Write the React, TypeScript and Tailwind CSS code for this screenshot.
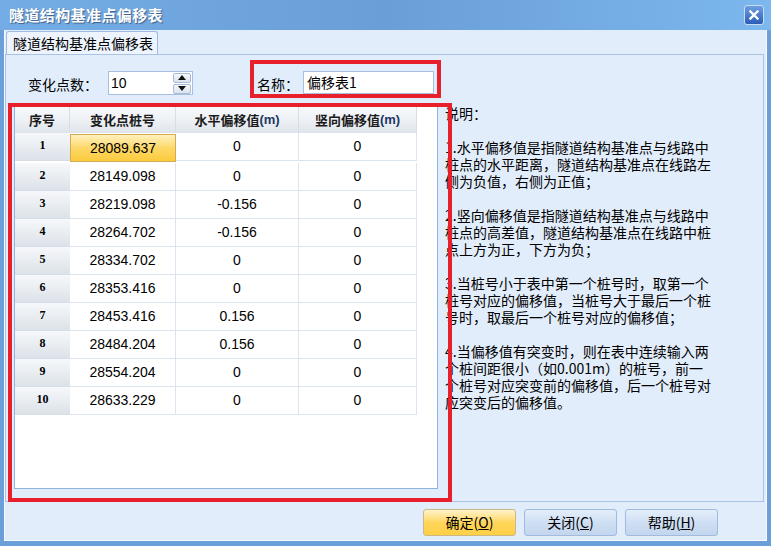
import React from "react";

const rows: [string, string, string, string][] = [
  ["1", "28089.637", "0", "0"],
  ["2", "28149.098", "0", "0"],
  ["3", "28219.098", "-0.156", "0"],
  ["4", "28264.702", "-0.156", "0"],
  ["5", "28334.702", "0", "0"],
  ["6", "28353.416", "0", "0"],
  ["7", "28453.416", "0.156", "0"],
  ["8", "28484.204", "0.156", "0"],
  ["9", "28554.204", "0", "0"],
  ["10", "28633.229", "0", "0"],
];

const notes = [
  "说明：",
  "",
  "1.水平偏移值是指隧道结构基准点与线路中",
  "桩点的水平距离，隧道结构基准点在线路左",
  "侧为负值，右侧为正值；",
  "",
  "2.竖向偏移值是指隧道结构基准点与线路中",
  "桩点的高差值，隧道结构基准点在线路中桩",
  "点上方为正，下方为负；",
  "",
  "3.当桩号小于表中第一个桩号时，取第一个",
  "桩号对应的偏移值，当桩号大于最后一个桩",
  "号时，取最后一个桩号对应的偏移值；",
  "",
  "4.当偏移值有突变时，则在表中连续输入两",
  "个桩间距很小（如0.001m）的桩号，前一",
  "个桩号对应突变前的偏移值，后一个桩号对",
  "应突变后的偏移值。",
];

const cjk = { fontFamily: '"Noto Sans CJK SC", "Liberation Sans", sans-serif' };
const num = { fontFamily: '"Liberation Sans", "Noto Sans CJK SC", sans-serif' };

function Button({ label, hot, primary }: { label: string; hot: string; primary?: boolean }) {
  return (
    <div
      className={`w-[93px] h-[27px] rounded-[3px] border flex items-center justify-center text-[14px] text-black ${
        primary
          ? "border-[#c9b98a] bg-gradient-to-b from-[#fff3c8] via-[#ffd65a] to-[#ffcf45]"
          : "border-[#9fbbe0] bg-gradient-to-b from-[#e4eefa] via-[#cfdff3] to-[#c3d6ee]"
      }`}
      style={cjk}
    >
      {label}(<span className="underline">{hot}</span>)
    </div>
  );
}

export default function App() {
  return (
    <div className="relative w-[771px] h-[546px] bg-[#6a9fd9] flex flex-col overflow-hidden" style={cjk}>
      {/* title bar */}
      <div className="h-[30px] shrink-0 flex items-center justify-between pl-[9px] pr-[7px] bg-gradient-to-r from-[#74ade5] via-[#6a9ed7] to-[#7cb7ee]">
        <span
          className="text-white font-bold text-[15px] tracking-[0.4px]"
          style={{ textShadow: "1px 1px 1px #3b5f8c" }}
        >
          隧道结构基准点偏移表
        </span>
        <div className="w-[20px] h-[20px] rounded-[3px] border border-[#c8dbf3] bg-gradient-to-b from-[#6c9fe0] to-[#2b5db6] flex items-center justify-center">
          <svg width="10" height="10" viewBox="0 0 10 10">
            <path d="M1.5 1.5 L8.5 8.5 M8.5 1.5 L1.5 8.5" stroke="white" strokeWidth="2.4" strokeLinecap="square" />
          </svg>
        </div>
      </div>

      {/* body */}
      <div className="flex-1 ml-[4px] mr-[4px] mb-[5px] bg-[#e2edfb] flex flex-col border-l border-r border-b border-white/70">
        {/* tab strip */}
        <div className="h-[24px] shrink-0 flex items-end pl-[1px]">
          <div className="w-[152px] h-[23px] rounded-t-[3px] border border-b-0 border-[#9dbbe0] bg-[#edf4fd] flex items-center pl-[6px] text-[14px] text-black">
            隧道结构基准点偏移表
          </div>
        </div>

        {/* tab panel */}
        <div className="h-[448px] shrink-0 ml-[0px] mr-[2px] border border-[#a9c3e4] bg-[#e2edfb] flex flex-col">
          {/* top inputs */}
          <div className="h-[50px] shrink-0 flex items-start pt-[16px] pl-[22px] text-[14px] text-black">
            <span className="mt-[3px] w-[80px]">变化点数：</span>
            <div className="w-[85px] h-[24px] border border-[#a7c0e1] bg-white flex items-center justify-between pl-[2px] pr-[1px]">
              <span style={num}>10</span>
              <div className="flex flex-col gap-[1px]">
                {[0, 1].map((i) => (
                  <div
                    key={i}
                    className="w-[18px] h-[10px] rounded-[2px] border border-[#a9bcd6] bg-gradient-to-b from-[#f6f8fb] to-[#dbe3ee] flex items-center justify-center"
                  >
                    <svg width="8" height="5" viewBox="0 0 8 5">
                      <path d={i === 0 ? "M0 5 L4 0 L8 5 Z" : "M0 0 L8 0 L4 5 Z"} fill="#111" />
                    </svg>
                  </div>
                ))}
              </div>
            </div>
            <span className="ml-[64px] mt-[3px] w-[46px]">名称：</span>
            <div className="w-[131px] h-[23px] border border-[#a7c0e1] bg-white flex items-center pl-[3px]">
              偏移表1
            </div>
          </div>

          {/* content */}
          <div className="flex items-start">
            <div className="ml-[8px] w-[424px] h-[384px] border border-[#8fb3e3] bg-white">
              <div className="grid grid-cols-[55px_106px_123px_118px]">
                {["序号", "变化点桩号", "水平偏移值", "竖向偏移值"].map((h, i) => (
                  <div
                    key={h}
                    className="h-[27px] flex items-center justify-center font-bold text-[13px] text-[#1b1b1b] border-r border-[#d6dee8] bg-gradient-to-b from-[#f8fafc] via-[#eef1f5] to-[#dfe5ec]"
                  >
                    {h}
                    {i >= 2 && <span className="text-[#1e3764]" style={num}>(m)</span>}
                  </div>
                ))}
                {rows.map((r, ri) =>
                  r.map((c, ci) => {
                    if (ci === 0)
                      return (
                        <div
                          key={`${ri}-${ci}`}
                          className="h-[28px] flex items-center justify-center pb-[3px] font-bold text-[12px] text-black border-b border-[#d8dee6] bg-gradient-to-b from-[#f6f8fa] to-[#dce2e9]"
                          style={{ fontFamily: '"Liberation Serif", serif' }}
                        >
                          {c}
                        </div>
                      );
                    const sel = ri === 0 && ci === 1;
                    return (
                      <div
                        key={`${ri}-${ci}`}
                        className={`h-[28px] flex items-center justify-center text-[14px] text-black ${
                          sel
                            ? "border border-[#d3ab52] bg-gradient-to-b from-[#fff0bd] via-[#fdd866] to-[#fbcb3c] mx-[0px] my-[1px] h-[26px]"
                            : "border-r border-b border-[#dbe5f2]"
                        }`}
                        style={num}
                      >
                        {c}
                      </div>
                    );
                  })
                )}
              </div>
            </div>

            <div className="ml-[7px] text-[14px] leading-[17px] text-black whitespace-pre" style={cjk}>
              {notes.map((l, i) => (
                <div key={i} className="h-[17px]">
                  {l}
                </div>
              ))}
            </div>
          </div>
        </div>

        {/* footer */}
        <div className="flex-1 flex items-start justify-end gap-[8px] pt-[7px] pr-[48px]">
          <Button label="确定" hot="O" primary />
          <Button label="关闭" hot="C" />
          <Button label="帮助" hot="H" />
        </div>
      </div>

      {/* red annotation boxes */}
      <div className="absolute left-[250px] top-[60px] w-[191px] h-[38px] border-[4px] border-[#e8202b] pointer-events-none" />
      <div className="absolute left-[8px] top-[103px] w-[444px] h-[399px] border-[4px] border-[#e8202b] pointer-events-none" />
    </div>
  );
}
